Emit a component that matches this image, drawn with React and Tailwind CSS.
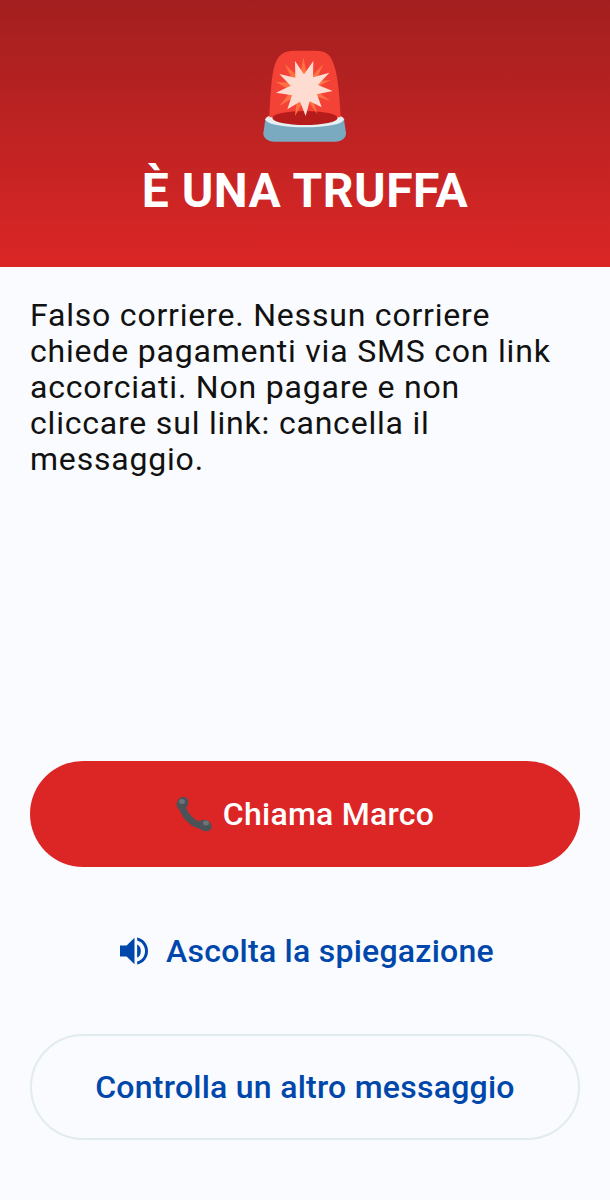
import React from "react";

const fontStack = "font-['Roboto',sans-serif]";

const SirenIcon = () => (
  <svg width="130" height="125" viewBox="0 0 390 375" className="block">
    <path d="M70 310 L76 268 L312 268 L318 310 C318 325 305 335 285 335 L103 335 C83 335 70 325 70 310 Z" fill="#7aaabf" />
    <ellipse cx="194" cy="268" rx="118" ry="24" fill="#e6f0f3" />
    <path d="M88 262 C92 180 96 120 108 95 C118 72 135 62 160 62 L228 62 C255 62 270 72 278 95 C292 125 298 180 302 262 Z" fill="#f44336" />
    <ellipse cx="195" cy="264" rx="98" ry="21" fill="#b71c1c" />
    <g fill="#ff7043">
      <path d="M178 150 L190 82 L204 150 Z" />
      <path d="M205 150 L250 102 L222 165 Z" />
      <path d="M220 155 L272 150 L225 175 Z" />
      <path d="M225 180 L270 212 L215 195 Z" />
      <path d="M215 195 L232 252 L198 205 Z" />
      <path d="M195 205 L165 258 L172 195 Z" />
      <path d="M175 195 L118 228 L160 175 Z" />
      <path d="M160 185 L106 155 L165 160 Z" />
      <path d="M165 165 L134 102 L185 150 Z" />
    </g>
    <path
      d="M165 93 L192 133 L220 93 L219 142 L268 128 L234 165 L278 183 L231 193 L245 232 L209 214 L197 258 L180 215 L142 238 L156 196 L108 188 L152 167 L118 132 L166 143 Z"
      fill="#ffdcd2"
    />
  </svg>
);

const PhoneIcon = () => (
  <svg width="36" height="36" viewBox="0 0 36 36" className="block">
    <path d="M6 7 C6 18 17 30 29 30" fill="none" stroke="#4a5357" strokeWidth="7" />
    <ellipse cx="6.5" cy="7.5" rx="5.5" ry="7" fill="#4a5357" transform="rotate(25 6.5 7.5)" />
    <ellipse cx="29" cy="29.5" rx="7" ry="5.5" fill="#4a5357" transform="rotate(25 29 29.5)" />
    <ellipse cx="6" cy="5.5" rx="3" ry="2.5" fill="#6b7479" />
    <ellipse cx="30" cy="27" rx="3" ry="2.5" fill="#6b7479" />
  </svg>
);

const SpeakerIcon = () => (
  <svg width="28" height="28" viewBox="0 0 85 84" className="block">
    <path d="M0 25 H20 L44 2 V82 L20 59 H0 Z" fill="#0047ab" />
    <path d="M52 22 C67 27 67 57 52 62 Z" fill="#0047ab" />
    <path d="M52 1 C72 5 85 22 85 42 C85 62 72 79 52 83 L52 74 C67 70 76 57 76 42 C76 27 67 14 52 10 Z" fill="#0047ab" />
  </svg>
);

const App = () => {
  return (
    <div className={`min-h-screen flex flex-col bg-[#f9fbfe] ${fontStack}`}>
      {/* Verdict header */}
      <header className="h-[267px] flex flex-col items-center pt-[30px] bg-gradient-to-b from-[#a31f1f] to-[#dc2626]">
        <SirenIcon />
        <h1 className="mt-[8px] text-[48px] leading-[56px] font-bold text-white tracking-[0.5px]">
          È UNA TRUFFA
        </h1>
      </header>

      {/* Explanation */}
      <main className="flex-1 flex flex-col px-[30px] pt-[30px] pb-[60px]">
        <p className="text-[32px] leading-[36px] text-[#111111] tracking-wide">
          Falso corriere. Nessun corriere chiede pagamenti via SMS con link accorciati. Non pagare e non cliccare sul link: cancella il messaggio.
        </p>

        <div className="mt-auto flex flex-col gap-[30px]">
          <button className="h-[106px] rounded-full bg-[#dc2626] text-white text-[32px] font-medium tracking-[0.25px] flex items-center justify-center gap-[11px]">
            <PhoneIcon />
            Chiama Marco
          </button>
          <button className="h-[107px] pl-[4px] text-[#0047ab] text-[32px] font-medium tracking-[0.25px] flex items-center justify-center gap-[18px]">
            <SpeakerIcon />
            Ascolta la spiegazione
          </button>
          <button className="h-[106px] rounded-full border-2 border-[#e2ebef] text-[#0047ab] text-[32px] font-medium tracking-[0.25px] flex items-center justify-center">
            Controlla un altro messaggio
          </button>
        </div>
      </main>
    </div>
  );
};

export default App;
